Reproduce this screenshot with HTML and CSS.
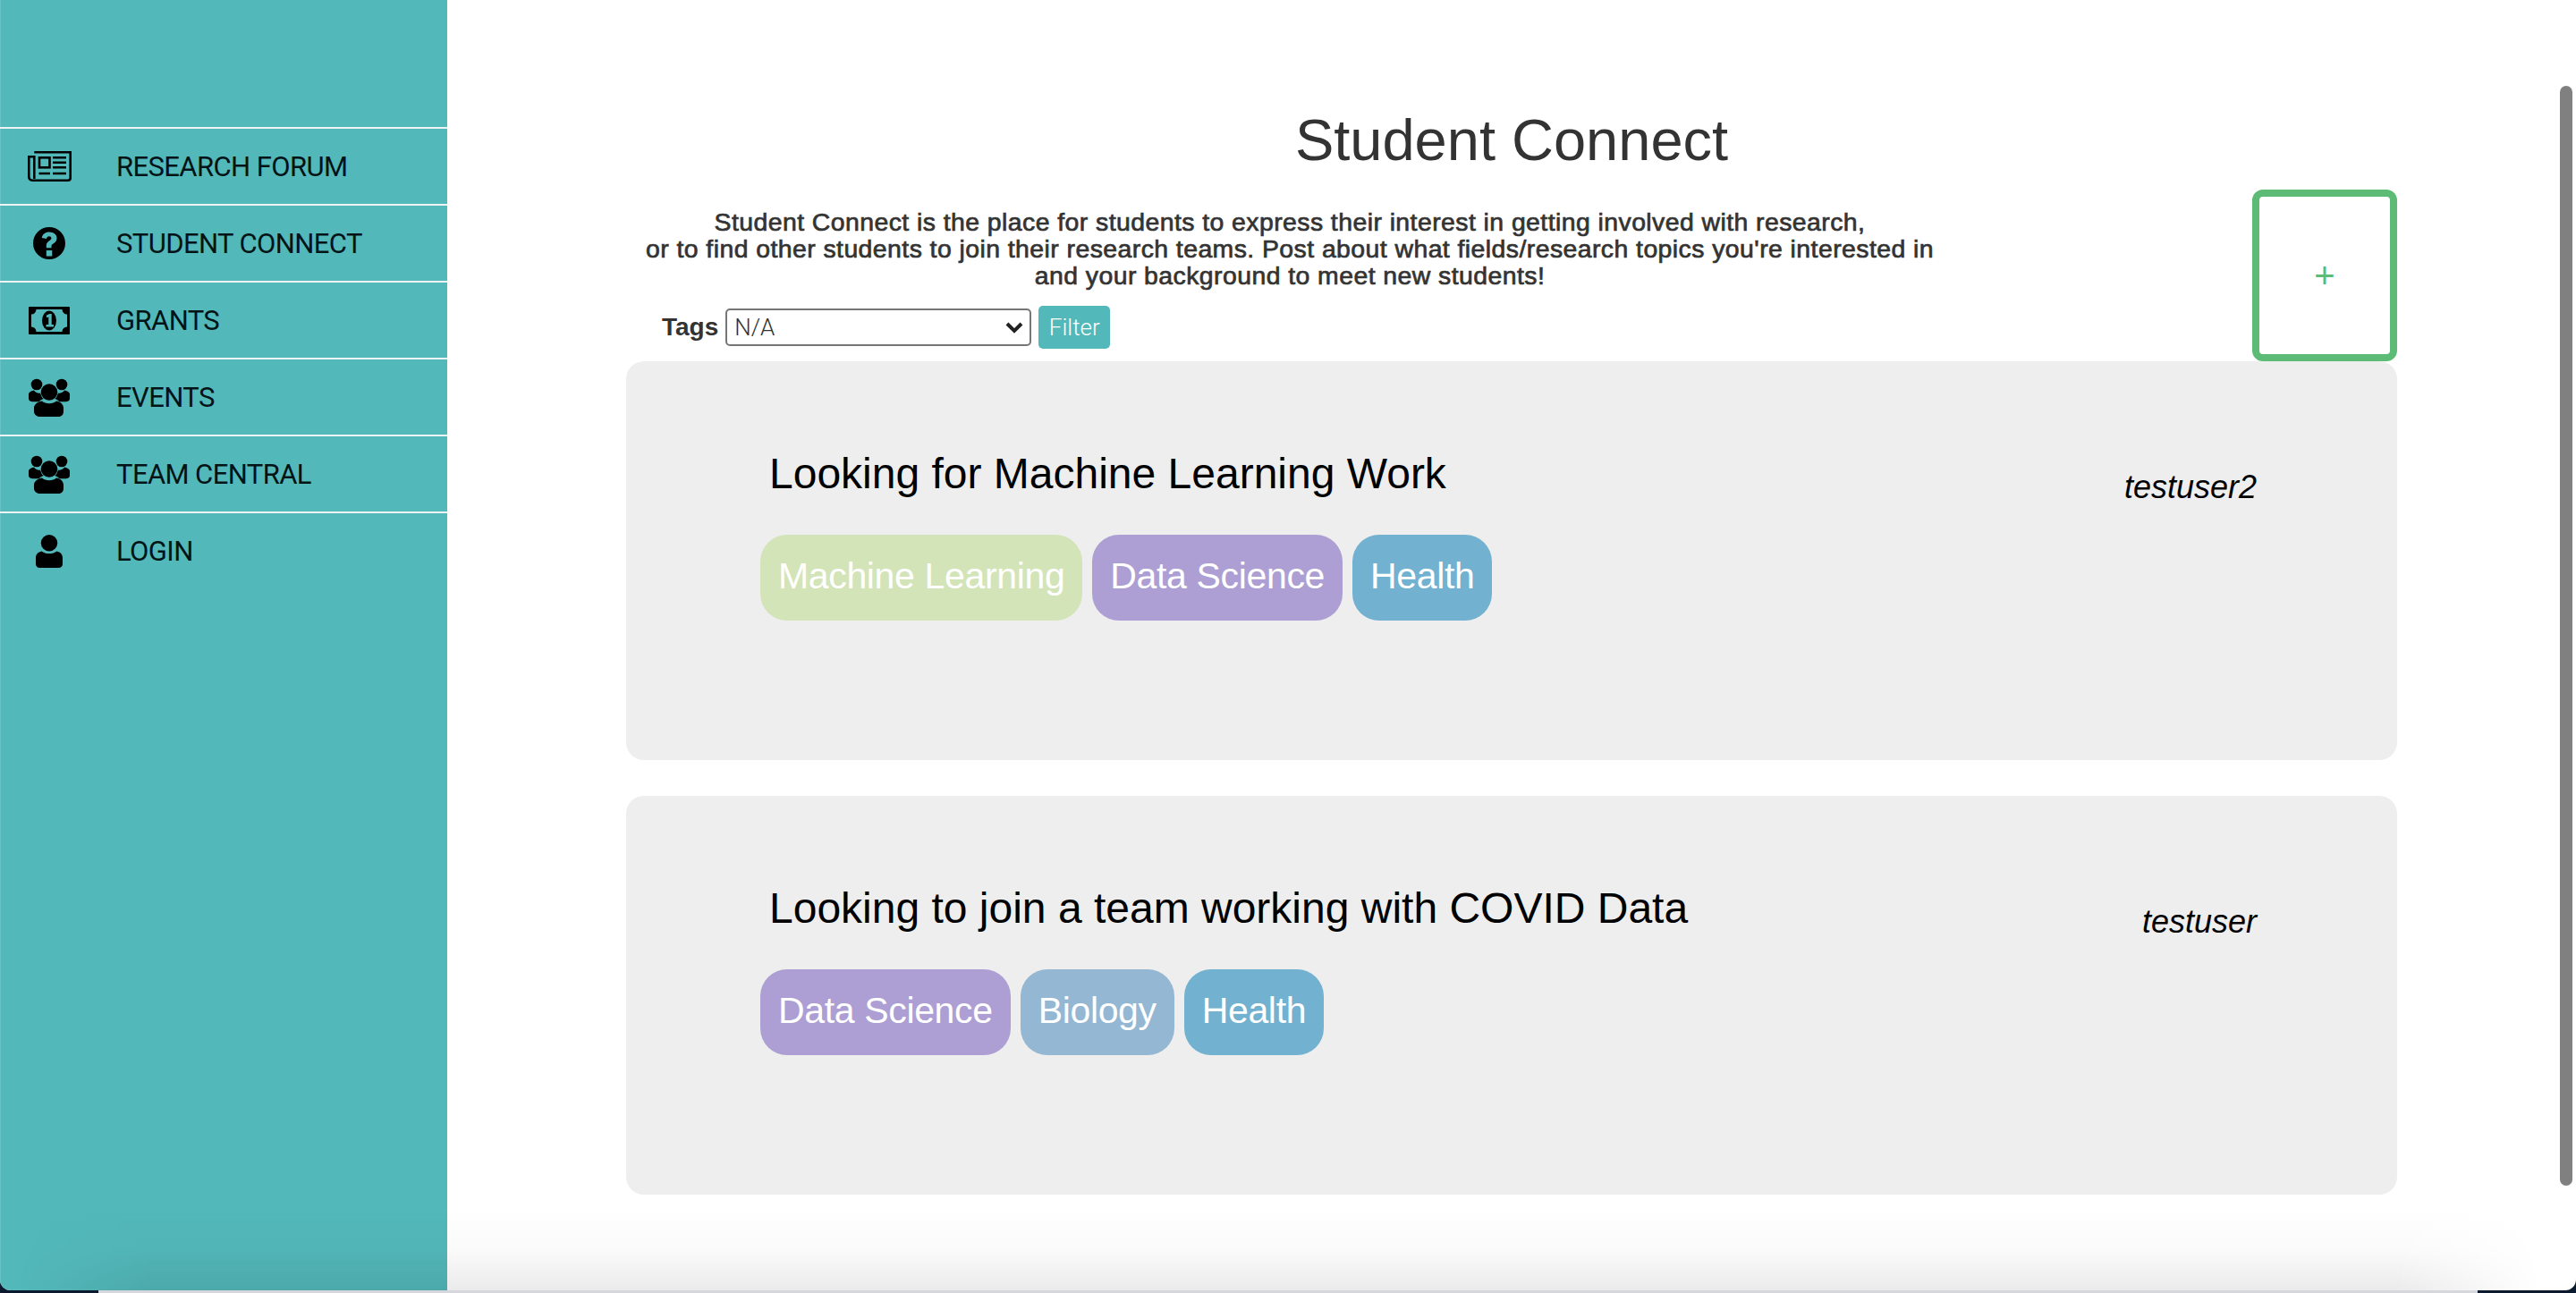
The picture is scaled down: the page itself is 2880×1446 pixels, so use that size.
FILE: index.html
```html
<!DOCTYPE html>
<html lang="en">
<head>
  <meta charset="UTF-8">
  <title>Student Connect</title>
  <link rel="stylesheet" href="styles.css">
</head>
<body>
  <!-- Icon set used by the sidebar -->
  <svg class="icon-defs" aria-hidden="true">
    <symbol id="icon-users" viewBox="0 0 46 43">
      <circle cx="9" cy="7" r="6.3"/>
      <circle cx="37" cy="7" r="6.3"/>
      <path d="M6 13.5c.8 2 3.6 3.2 6 3.2h1.2c.6 3 1.6 5 3.6 6.4-2.2.6-3.8 1.6-5 3.1H4c-2.4 0-4-1.4-4-3.6v-4.8c0-2 2.2-3.6 6-4.3z"/>
      <path d="M40 13.5c-.8 2-3.6 3.2-6 3.2h-1.2c-.6 3-1.6 5-3.6 6.4 2.2.6 3.8 1.6 5 3.1H42c2.4 0 4-1.4 4-3.6v-4.8c0-2-2.200-3.600-6-4.300z"/>
      <circle cx="23" cy="15.500" r="9.300"/>
      <path d="M15 25.500c2 1.800 4.800 2.800 8 2.800s6-1 8-2.800c3.800.8 8 2.800 8 8v3.500c0 3.500-2 6-5.500 6H12.500C9 43 6 40.500 6 37v-3.500c0-5.200 5.200-7.200 9-8z"/>
    </symbol>
  </svg>

  <div class="window">
    <nav class="sidebar">
      <a class="nav-item" href="#">
        <span class="nav-icon">
          <svg width="49" height="34" viewBox="0 0 49 34" fill="none" stroke="#000" stroke-width="2.600">
            <path d="M7.300 1.300H47.700V30a2.700 2.700 0 0 1-2.700 2.700H5A3.700 3.700 0 0 1 1.300 29V6.300H7.300V31"/>
            <rect x="13" y="7.300" width="11.500" height="11"/>
            <path d="M28 7.300H43M28 12.800H43M28 18.300H43M12.500 25H25M28 25H43"/>
          </svg>
        </span>
        RESEARCH FORUM
      </a>
      <a class="nav-item" href="#">
        <span class="nav-icon">
          <svg width="36" height="36" viewBox="0 0 36 36">
            <path fill-rule="evenodd" d="M18 0a18 18 0 1 1 0 36a18 18 0 0 1 0-36zM14.800 26v6.500h6.500V26zM18 5.500c-4.400 0-7.500 2.400-8.300 6.400l5.300 1.200c.4-1.800 1.300-2.800 2.900-2.800 1.500 0 2.500.8 2.500 2 0 1.100-.7 1.800-2.300 2.900-2.300 1.500-3.300 3.100-3.300 5.300v2.700h5.700v-1.900c0-1.200.5-1.800 2-2.800 2.700-1.800 4-3.600 4-6.300 0-3.900-3.600-6.700-8.500-6.700z"/>
          </svg>
        </span>
        STUDENT CONNECT
      </a>
      <a class="nav-item" href="#">
        <span class="nav-icon">
          <svg width="46" height="31" viewBox="0 0 46 31">
            <path fill-rule="evenodd" d="M1 0H45a1 1 0 0 1 1 1V30a1 1 0 0 1-1 1H1a1 1 0 0 1-1-1V1a1 1 0 0 1 1-1zM8.500 3a5.500 5.500 0 0 1-5.500 5.500V22.500a5.500 5.500 0 0 1 5.500 5.500H37.500a5.500 5.500 0 0 1 5.500-5.500V8.500a5.500 5.500 0 0 1-5.500-5.500z"/>
            <ellipse cx="23" cy="15.500" rx="8" ry="11"/>
            <path fill="#53b8ba" d="M20 9.500l3.500-1.500h2.200v12h2.300v2.500H19.500V20h2.800v-8.500l-2.300.8z"/>
          </svg>
        </span>
        GRANTS
      </a>
      <a class="nav-item" href="#">
        <span class="nav-icon"><svg width="46" height="43"><use href="#icon-users"/></svg></span>
        EVENTS
      </a>
      <a class="nav-item" href="#">
        <span class="nav-icon"><svg width="46" height="43"><use href="#icon-users"/></svg></span>
        TEAM CENTRAL
      </a>
      <a class="nav-item" href="#">
        <span class="nav-icon">
          <svg width="30" height="37" viewBox="0 0 30 37">
            <circle cx="15" cy="9.200" r="9.200"/>
            <path d="M6.500 18.500c2.200 1.700 5 2.600 8.500 2.600s6.300-.9 8.500-2.600c3.800.9 6.500 3 6.500 7.500v6.500c0 2.800-1.800 4.500-4.500 4.500H4.500C1.800 37 0 35.300 0 32.500V26c0-4.500 2.700-6.600 6.500-7.500z"/>
          </svg>
        </span>
        LOGIN
      </a>
    </nav>

    <main class="content">
      <h1 class="page-title">Student Connect</h1>

      <div class="top-row">
        <div class="intro">
          <p class="intro-text">
            Student Connect is the place for students to express their interest in getting involved with research,<br>
            or to find other students to join their research teams. Post about what fields/research topics you're interested in<br>
            and your background to meet new students!
          </p>
          <form class="filter-form">
            <label class="filter-label" for="tags">Tags</label>
            <select class="filter-select" id="tags">
              <option>N/A</option>
            </select>
            <button class="filter-button" type="button">Filter</button>
          </form>
        </div>
        <button class="add-button" type="button">+</button>
      </div>

      <article class="post">
        <div class="post-head">
          <h2 class="post-title">Looking for Machine Learning Work</h2>
          <span class="post-author">testuser2</span>
        </div>
        <div class="tag-list">
          <span class="tag tag-ml">Machine Learning</span>
          <span class="tag tag-data">Data Science</span>
          <span class="tag tag-health">Health</span>
        </div>
      </article>

      <article class="post">
        <div class="post-head">
          <h2 class="post-title">Looking to join a team working with COVID Data</h2>
          <span class="post-author">testuser</span>
        </div>
        <div class="tag-list">
          <span class="tag tag-data">Data Science</span>
          <span class="tag tag-bio">Biology</span>
          <span class="tag tag-health">Health</span>
        </div>
      </article>
    </main>

    <div class="scroll-thumb"></div>
    <div class="bottom-shade"></div>
  </div>
  <div class="desk-strip"></div>
</body>
</html>
```

FILE: styles.css
```css
/* Global Styles */
html, body {
  height: 100%;
}
body {
  margin: 0;
  overflow: hidden;
  background: #0b1a2e;
  font-family: "Liberation Sans", Arial, sans-serif;
  color: #333;
}
.icon-defs {
  display: none;
}
.window {
  position: relative;
  display: flex;
  height: calc(100% - 3px);
  background: #fff;
  border-radius: 0 0 12px 12px;
  overflow: hidden;
}
.desk-strip {
  height: 3px;
  margin: 0 110px;
  background: #d5d7dd;
}

/* Sidebar */
.sidebar {
  flex: 0 0 500px;
  padding-top: 142px;
  background: #53b8ba;
  box-shadow: inset 1px 0 0 #68c2c4;
}
.nav-item {
  display: flex;
  align-items: center;
  height: 86px;
  box-sizing: border-box;
  border-top: 2px solid #eef3f3;
  font-family: Roboto, sans-serif;
  font-size: 31px;
  letter-spacing: -0.6px;
  color: #041416;
  text-decoration: none;
}
.nav-icon {
  display: flex;
  justify-content: center;
  flex: 0 0 110px;
  margin-right: 20px;
}

/* Main column */
.content {
  flex: 1;
  padding: 0 200px;
}
.page-title {
  margin: 0;
  padding-top: 120px;
  font-size: 65px;
  line-height: 74px;
  font-weight: 400;
  text-align: center;
}
.top-row {
  display: flex;
  justify-content: space-between;
  align-items: flex-end;
  margin-top: 18px;
}
.intro {
  width: 1484px;
  padding-bottom: 14px;
}
.intro-text {
  margin: 0;
  font-size: 28.4px;
  line-height: 30px;
  letter-spacing: 0.44px;
  font-weight: 400;
  -webkit-text-stroke: 0.7px #333;
  text-align: center;
}
.filter-form {
  display: flex;
  align-items: center;
  margin: 19px 0 0 40px;
}
.filter-label {
  margin-right: 8px;
  font-size: 28px;
  font-weight: 700;
}
.filter-select {
  width: 342px;
  height: 42px;
  padding: 0 0 0 8px;
  border: 2px solid #767676;
  border-radius: 5px;
  appearance: none;
  background: #fff url("data:image/svg+xml,%3Csvg xmlns='http://www.w3.org/2000/svg' width='20' height='14' viewBox='0 0 20 14'%3E%3Cpath d='M2 3l8 8 8-8' fill='none' stroke='%23222' stroke-width='4'/%3E%3C/svg%3E") no-repeat right 7px center;
  font-family: Roboto, sans-serif;
  font-size: 26px;
  font-weight: 300;
  color: #333;
}
.filter-button {
  width: 80px;
  height: 48px;
  margin-left: 8px;
  padding: 0;
  border: none;
  border-radius: 5px;
  background: #53b8ba;
  color: #fff;
  font-family: Roboto, sans-serif;
  font-size: 26px;
  font-weight: 300;
}
.add-button {
  width: 162px;
  height: 192px;
  padding: 0;
  border: 8px solid #5cbb74;
  border-radius: 12px;
  background: #fff;
  color: #5cbb74;
  font-family: inherit;
  font-size: 40px;
}

/* Posts */
.post {
  height: 446px;
  box-sizing: border-box;
  margin-bottom: 40px;
  padding: 98px 157px 0 150px;
  border-radius: 20px;
  background: #eee;
}
.post-head {
  display: flex;
  justify-content: space-between;
  align-items: baseline;
  padding-left: 10px;
}
.post-title {
  margin: 0;
  font-size: 48px;
  line-height: 56px;
  font-weight: 400;
  color: #000;
}
.post-author {
  position: relative;
  top: 11px;
  font-size: 36px;
  font-style: italic;
  color: #000;
}
.tag-list {
  display: flex;
  gap: 11px;
  margin-top: 40px;
}
.tag {
  height: 96px;
  padding: 0 20px;
  border-radius: 30px;
  font-size: 41px;
  letter-spacing: -0.35px;
  line-height: 92px;
  color: #fff;
}
.tag-ml {
  background: #d3e4b8;
}
.tag-data {
  background: #ad9fd4;
}
.tag-health {
  background: #72b1d0;
}
.tag-bio {
  background: #94b8d3;
}

/* Overlays: window scrollbar and the shade along the bottom edge */
.scroll-thumb {
  position: absolute;
  top: 96px;
  right: 4px;
  width: 14px;
  height: 1230px;
  border-radius: 7px;
  background: #808080;
}
.bottom-shade {
  position: absolute;
  left: 0;
  right: 0;
  bottom: 0;
  height: 90px;
  background: linear-gradient(to bottom, rgba(0,0,0,0), rgba(0,0,0,0.02) 50%, rgba(0,0,0,0.08));
  -webkit-mask-image: linear-gradient(to right, transparent 20px, #000 170px, #000 2680px, transparent 2840px);
  pointer-events: none;
}
```
